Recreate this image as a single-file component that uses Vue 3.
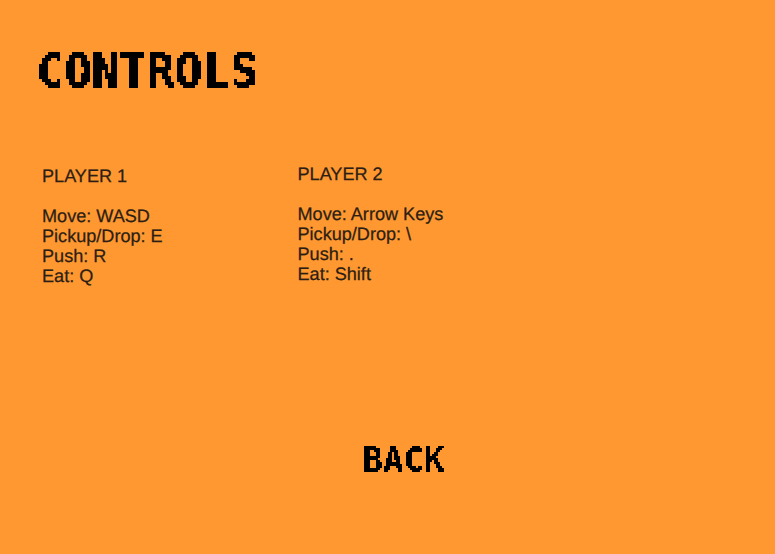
<script setup>
const players = [
  { name: 'PLAYER 1', keys: ['Move: WASD', 'Pickup/Drop: E', 'Push: R', 'Eat: Q'] },
  { name: 'PLAYER 2', keys: ['Move: Arrow Keys', 'Pickup/Drop: \\', 'Push: .', 'Eat: Shift'] },
]
</script>

<template>
  <main class="screen">
    <svg class="defs" width="0" height="0" aria-hidden="true">
      <!-- Samples one dot per cell and grows it into a square block -->
      <filter id="pixel-large" x="0" y="0" width="100%" height="100%" color-interpolation-filters="sRGB">
        <feFlood x="1" y="1" width="1" height="1" flood-color="#000" result="dot" />
        <feOffset in="dot" x="0" y="0" width="3" height="3" result="cell" />
        <feTile in="cell" result="grid" />
        <feComposite in="SourceGraphic" in2="grid" operator="in" />
        <feComponentTransfer>
          <feFuncA type="discrete" tableValues="0 1" />
        </feComponentTransfer>
        <feMorphology operator="dilate" radius="1" />
      </filter>
      <filter id="pixel-small" x="0" y="0" width="100%" height="100%" color-interpolation-filters="sRGB">
        <feFlood x="0" y="0" width="1" height="1" flood-color="#000" result="dot" />
        <feOffset in="dot" x="0" y="0" width="2" height="2" result="cell" />
        <feTile in="cell" result="grid" />
        <feComposite in="SourceGraphic" in2="grid" operator="in" />
        <feComponentTransfer result="dots">
          <feFuncA type="discrete" tableValues="0 1" />
        </feComponentTransfer>
        <feOffset in="dots" dx="1" dy="0" result="right" />
        <feMerge result="row">
          <feMergeNode in="dots" />
          <feMergeNode in="right" />
        </feMerge>
        <feOffset in="row" dx="0" dy="1" result="below" />
        <feMerge>
          <feMergeNode in="row" />
          <feMergeNode in="below" />
        </feMerge>
      </filter>
    </svg>
    <h1 class="title">CONTROLS</h1>
    <div class="players">
      <section v-for="p in players" :key="p.name" class="player">
        <h2>{{ p.name }}</h2>
        <p v-for="k in p.keys" :key="k">{{ k }}</p>
      </section>
    </div>
    <button class="back" type="button">BACK</button>
  </main>
</template>

<style>
body {
  margin: 0;
  background: #ff9830;
}
</style>

<style scoped>
.screen {
  box-sizing: border-box;
  display: flex;
  flex-direction: column;
  height: 554px;
  padding: 43px 36px 0;
  overflow: hidden;
  background: #ff9830;
  font-family: "Liberation Sans", Arial, sans-serif;
}
.defs {
  position: absolute;
}
.title,
.back {
  margin: 0;
  padding: 0;
  border: 0;
  background: none;
  color: #000;
  font-family: "DejaVu Sans Mono", monospace;
  font-weight: 700;
}
.title {
  align-self: flex-start;
  height: 57px;
  padding: 0 3px 0 0.5px;
  font-size: 46px;
  line-height: 56px;
  -webkit-text-stroke: 0.4px #000;
  filter: url(#pixel-large);
}
.players {
  display: flex;
  height: 120px;
  margin: 66px 0 0 6px;
}
.player {
  width: 255.5px;
  color: #2c1e14;
  font-size: 18.1px;
  line-height: 20px;
  text-rendering: geometricPrecision;
  -webkit-text-stroke: 0.25px #2c1e14;
}
.player + .player {
  margin-top: -2px;
}
.player h2 {
  margin: 0 0 20px;
  font-size: inherit;
  font-weight: 400;
}
.player p {
  margin: 0;
}
.back {
  align-self: flex-start;
  height: 42px;
  margin: 152px 0 0 326px;
  font-size: 34px;
  line-height: 42px;
  filter: url(#pixel-small);
}
</style>
